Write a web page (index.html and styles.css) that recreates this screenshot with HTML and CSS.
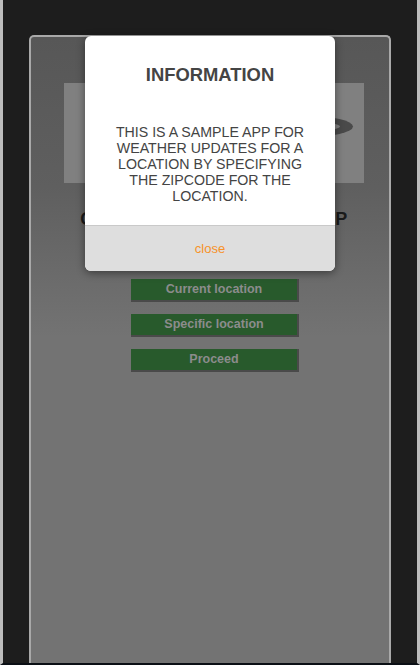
FILE: index.html
```html
<!DOCTYPE html>
<html>
<head>
<meta charset="utf-8">
<link rel="stylesheet" href="styles.css">
</head>
<body>
<div class="frame">
  <div class="card">
    <div class="banner">
      <svg class="logo" width="300" height="100" viewBox="0 0 300 100">
        <ellipse cx="243" cy="43.5" rx="46" ry="10.5" fill="#4a4a4a"/>
        <ellipse cx="235" cy="43.5" rx="41" ry="5.5" fill="#808080"/>
      </svg>
    </div>
    <h1 class="app-title">CHECK YOUR WEATHER APP</h1>
    <div class="actions">
      <button class="btn">Current location</button>
      <button class="btn">Specific location</button>
      <button class="btn">Proceed</button>
    </div>
  </div>
</div>
<div class="modal">
  <div class="modal-body">
    <h2 class="modal-title">INFORMATION</h2>
    <p class="modal-text">THIS IS A SAMPLE APP FOR WEATHER UPDATES FOR A LOCATION BY SPECIFYING THE ZIPCODE FOR THE LOCATION.</p>
  </div>
  <div class="modal-footer"><span class="close">close</span></div>
</div>
</body>
</html>
```

FILE: styles.css
```css
html, body {
  margin: 0;
  padding: 0;
  height: 665px;
  overflow: hidden;
  font-family: "Liberation Sans", Arial, sans-serif;
}
.frame {
  box-sizing: border-box;
  height: 665px;
  background: #1d1d1d;
  border-left: 3px solid #bdbdbd;
  border-right: 3px solid #bdbdbd;
  border-bottom: 2px solid #0b0f15;
  padding-top: 35px;
  overflow: hidden;
}
.card {
  box-sizing: border-box;
  margin-left: 26px;
  width: 362px;
  height: 640px;
  border: 2px solid #a9a9a9;
  border-bottom: none;
  border-radius: 5px 5px 0 0;
  background: linear-gradient(to bottom, #575757 0, #5f5f5f 150px, #737373 300px, #737373 100%);
  padding: 46px 0 0 8px;
  display: flex;
  flex-direction: column;
  align-items: center;
}
.banner {
  width: 300px;
  height: 100px;
  background: #808080;
}
.logo { display: block; }
.app-title {
  margin: 24px 0 0 0;
  font-size: 18px;
  line-height: 24px;
  font-weight: bold;
  letter-spacing: 0.5px;
  color: #1b1b1b;
  white-space: nowrap;
}
.actions {
  margin-top: 48px;
  display: flex;
  flex-direction: column;
  align-items: center;
  gap: 14px;
}
.btn {
  width: 166px;
  height: 21px;
  padding: 0;
  border: none;
  background: #285a2c;
  color: #8c8c8c;
  font-family: "Liberation Sans", Arial, sans-serif;
  font-weight: bold;
  font-size: 12.5px;
  line-height: 21px;
  box-shadow: 1px 1px 0 1px #4a4a4a;
}
.modal {
  position: absolute;
  left: 85px;
  top: 36px;
  width: 250px;
  border-radius: 6px;
  overflow: hidden;
  background: #fff;
  box-shadow: 0 2px 8px rgba(0,0,0,0.45);
}
.modal-body {
  padding: 28px 24px 21px;
  text-align: center;
  color: #444;
}
.modal-title {
  margin: 0;
  font-size: 18.4px;
  line-height: 22px;
  font-weight: bold;
  color: #444;
}
.modal-text {
  margin: 38px 0 0 0;
  font-size: 14.2px;
  line-height: 16px;
  color: #444;
}
.modal-footer {
  height: 45px;
  border-top: 1px solid #c9c9c9;
  background: #dedede;
  display: flex;
  align-items: center;
  justify-content: center;
}
.close {
  color: #f7922a;
  font-size: 13px;
  line-height: 16px;
}
```
